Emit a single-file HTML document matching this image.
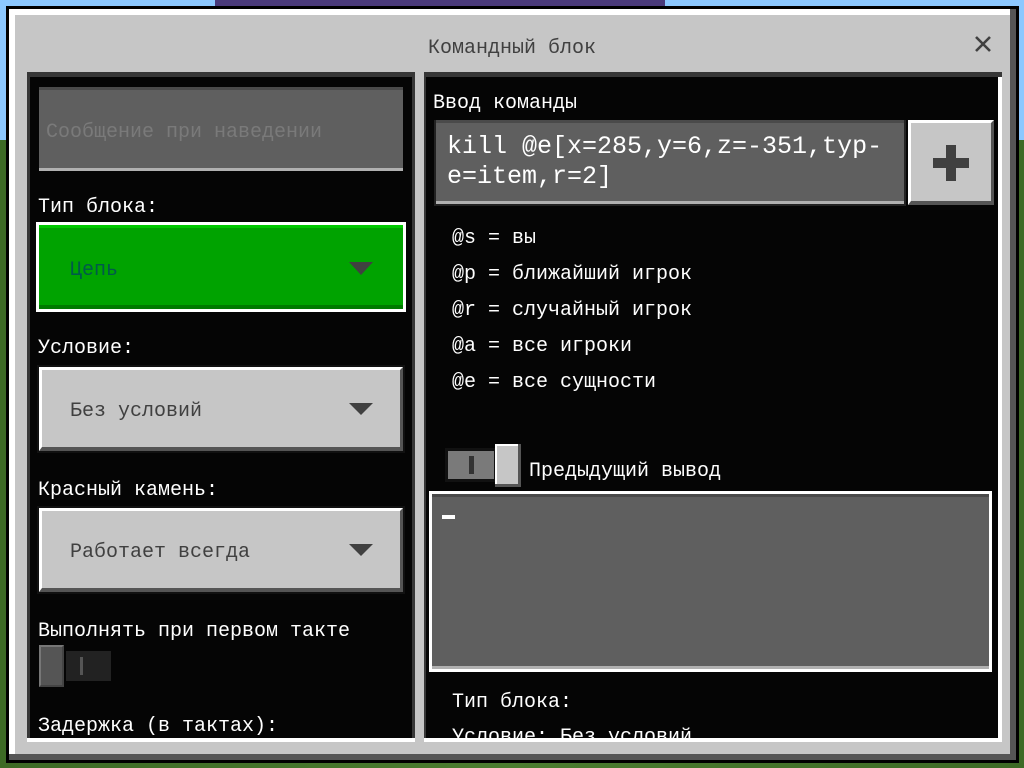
<!DOCTYPE html>
<html><head><meta charset="utf-8"><style>
*{margin:0;padding:0;box-sizing:border-box}
body{width:1024px;height:768px;overflow:hidden;position:relative;background:#3f6b2a;font-family:"Liberation Mono","DejaVu Sans Mono",monospace;font-size:20px;color:#fff}
.a{position:absolute}
.t{position:absolute;white-space:pre;line-height:20px;padding-top:2px}
</style></head><body>
<div class="a" style="left:0;top:0;width:1024px;height:140px;background:#8cc8ff"></div>
<div class="a" style="left:0;top:140px;width:1024px;height:628px;background:linear-gradient(90deg,#3d6a25,#4b7d30 50%,#3d6a25)"></div>
<div class="a" style="left:215px;top:0;width:450px;height:8px;background:#4a3a7a"></div>
<div class="a" style="left:6px;top:6px;width:1013px;height:757px;background:#000"></div>
<div class="a" style="left:9px;top:9px;width:1007px;height:751px;background:#555"></div>
<div class="a" style="left:9px;top:9px;width:1001px;height:745px;background:#fff"></div>
<div class="a" style="left:15px;top:15px;width:995px;height:739px;background:#c6c6c6"></div>
<div class="t" style="left:0;width:1024px;text-align:center;top:37px;color:#404040">Командный блок</div>
<svg class="a" style="left:975px;top:36px" width="16" height="16" viewBox="0 0 16 16"><path d="M1 1L15 15M15 1L1 15" stroke="#404040" stroke-width="2.6"/></svg>
<div class="a" style="left:27px;top:72px;width:388px;height:669px;background:#373737"></div>
<div class="a" style="left:30px;top:77px;width:382px;height:664px;background:#050505"></div>
<div class="a" style="left:39px;top:87px;width:364px;height:84px;background:#b0b0b0"></div>
<div class="a" style="left:39px;top:87px;width:364px;height:81px;background:#5f5f5f;border-top:3px solid #4a4a4a"></div>
<div class="t" style="left:46px;top:121px;color:#7a7a7a">Сообщение при наведении</div>
<div class="t" style="left:38px;top:196px">Тип блока:</div>
<div class="a" style="left:36px;top:222px;width:370px;height:90px;background:#fff"></div>
<div class="a" style="left:39px;top:225px;width:364px;height:84px;background:#00a300;border-top:3px solid #00c800;border-bottom:4px solid #007a00"></div>
<div class="t" style="left:70px;top:259px;color:#005a4a">Цепь</div>
<svg class="a" style="left:349px;top:262px" width="24" height="13"><path d="M0 0h24l-12 13z" fill="#404040"/></svg>
<div class="t" style="left:38px;top:337px">Условие:</div>
<div class="a" style="left:37px;top:365px;width:368px;height:88px;background:#111"></div>
<div class="a" style="left:39px;top:367px;width:364px;height:84px;background:#c6c6c6;border-top:3px solid #fff;border-left:3px solid #fff;border-bottom:4px solid #555;border-right:3px solid #555"></div>
<div class="t" style="left:70px;top:400px;color:#404040">Без условий</div>
<svg class="a" style="left:349px;top:403px" width="24" height="12"><path d="M0 0h24l-12 12z" fill="#404040"/></svg>
<div class="t" style="left:38px;top:479px">Красный камень:</div>
<div class="a" style="left:37px;top:506px;width:368px;height:88px;background:#111"></div>
<div class="a" style="left:39px;top:508px;width:364px;height:84px;background:#c6c6c6;border-top:3px solid #fff;border-left:3px solid #fff;border-bottom:4px solid #555;border-right:3px solid #555"></div>
<div class="t" style="left:70px;top:541px;color:#404040">Работает всегда</div>
<svg class="a" style="left:349px;top:544px" width="24" height="12"><path d="M0 0h24l-12 12z" fill="#404040"/></svg>
<div class="t" style="left:38px;top:620px">Выполнять при первом такте</div>
<div class="a" style="left:66px;top:651px;width:45px;height:30px;background:#222"></div>
<div class="a" style="left:80px;top:657px;width:3px;height:18px;background:#555"></div>
<div class="a" style="left:39px;top:645px;width:25px;height:42px;background:#555;border:2px solid #777;border-right-color:#444;border-bottom-color:#444"></div>
<div class="t" style="left:38px;top:715px">Задержка (в тактах):</div>
<div class="a" style="left:27px;top:738px;width:388px;height:4px;background:#fff"></div>
<div class="a" style="left:424px;top:72px;width:578px;height:669px;background:#373737"></div>
<div class="a" style="left:426px;top:77px;width:572px;height:664px;background:#050505"></div>
<div class="a" style="left:998px;top:77px;width:4px;height:664px;background:#fff"></div>
<div class="t" style="left:433px;top:92px">Ввод команды</div>
<div class="a" style="left:434px;top:120px;width:472px;height:86px;background:#222"></div>
<div class="a" style="left:436px;top:120px;width:468px;height:84px;background:#b0b0b0"></div>
<div class="a" style="left:436px;top:120px;width:468px;height:81px;background:#5f5f5f;border-top:3px solid #4a4a4a"></div>
<div class="t" style="left:447px;top:130px;font-size:25px;line-height:30px">kill @e[x=285,y=6,z=-351,typ-
e=item,r=2]</div>
<div class="a" style="left:908px;top:120px;width:86px;height:85px;background:#c6c6c6;border-top:3px solid #fff;border-left:3px solid #fff;border-bottom:4px solid #555;border-right:3px solid #555"></div>
<div class="a" style="left:933px;top:158px;width:36px;height:10px;background:#404040"></div>
<div class="a" style="left:946px;top:145px;width:10px;height:36px;background:#404040"></div>
<div class="t" style="left:452px;top:227px">@s = вы</div>
<div class="t" style="left:452px;top:263px">@p = ближайший игрок</div>
<div class="t" style="left:452px;top:299px">@r = случайный игрок</div>
<div class="t" style="left:452px;top:335px">@a = все игроки</div>
<div class="t" style="left:452px;top:371px">@e = все сущности</div>
<div class="a" style="left:445px;top:448px;width:50px;height:34px;background:#111"></div>
<div class="a" style="left:448px;top:451px;width:46px;height:28px;background:#7a7a7a"></div>
<div class="a" style="left:469px;top:456px;width:5px;height:18px;background:#333"></div>
<div class="a" style="left:495px;top:444px;width:26px;height:43px;background:#555"></div>
<div class="a" style="left:495px;top:444px;width:23px;height:40px;background:#c6c6c6;border-top:2px solid #fff;border-left:2px solid #fff"></div>
<div class="t" style="left:529px;top:460px">Предыдущий вывод</div>
<div class="a" style="left:429px;top:491px;width:563px;height:181px;background:#fff"></div>
<div class="a" style="left:432px;top:494px;width:557px;height:175px;background:#b0b0b0"></div>
<div class="a" style="left:432px;top:494px;width:557px;height:172px;background:#5f5f5f;border-top:3px solid #4a4a4a"></div>
<div class="a" style="left:442px;top:515px;width:13px;height:4px;background:#fff"></div>
<div class="t" style="left:452px;top:691px">Тип блока:</div>
<div class="a" style="left:426px;top:720px;width:572px;height:18px;overflow:hidden"><div class="t" style="left:26px;top:6px">Условие: Без условий</div></div>
<div class="a" style="left:424px;top:738px;width:578px;height:4px;background:#fff"></div>
</body></html>
